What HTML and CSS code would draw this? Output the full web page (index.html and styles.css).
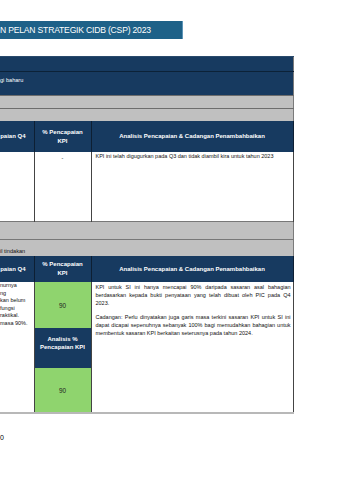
FILE: index.html
```html
<!DOCTYPE html>
<html>
<head>
<meta charset="utf-8">
<link rel="stylesheet" href="styles.css">
</head>
<body>
<div class="page">
  <div class="title">N PELAN STRATEGIK CIDB (CSP) 2023</div>
  <table class="kpi">
    <colgroup><col class="c1"><col class="c2"><col class="c3"></colgroup>
    <tr class="navy r1"><td colspan="3"></td></tr>
    <tr class="navy r2"><td colspan="3" class="top">gi baharu</td></tr>
    <tr class="grey r3"><td colspan="3"></td></tr>
    <tr class="grey r3"><td colspan="3"></td></tr>
    <tr class="navy head h1">
      <th class="left">paian Q4</th>
      <th>% Pencapaian<br>KPI</th>
      <th>Analisis Pencapaian &amp; Cadangan Penambahbaikan</th>
    </tr>
    <tr class="data d1">
      <td></td>
      <td class="center">-</td>
      <td class="text">KPI ini telah digugurkan pada Q3 dan tidak diambil kira untuk tahun 2023</td>
    </tr>
    <tr class="grey g1"><td colspan="3"></td></tr>
    <tr class="grey g2"><td colspan="3" class="bottom">il tindakan</td></tr>
    <tr class="navy head h2">
      <th class="left">paian Q4</th>
      <th>% Pencapaian<br>KPI</th>
      <th>Analisis Pencapaian &amp; Cadangan Penambahbaikan</th>
    </tr>
    <tr class="data s1">
      <td rowspan="3" class="text lefttext">nurnya<br>ng<br>kan belum<br>fungsi<br>raktikal.<br>masa 90%.</td>
      <td class="green">90</td>
      <td rowspan="3" class="text">
        <p class="para">
          <span class="jl">KPI untuk SI ini hanya mencapai 90% daripada sasaran asal bahagian</span>
          <span class="jl">berdasarkan kepada bukti penyataan yang telah dibuat oleh PIC pada Q4</span>
          <span class="ll">2023.</span>
        </p>
        <p class="para">
          <span class="jl">Cadangan: Perlu dinyatakan juga garis masa terkini sasaran KPI untuk SI ini</span>
          <span class="jl">dapat dicapai sepenuhnya sebanyak 100% bagi memudahkan bahagian untuk</span>
          <span class="ll">membentuk sasaran KPI berkaitan seterusnya pada tahun 2024.</span>
        </p>
      </td>
    </tr>
    <tr class="s2"><td class="navycell">Analisis %<br>Pencapaian KPI</td></tr>
    <tr class="s3"><td class="green">90</td></tr>
  </table>
  <div class="foot">0</div>
</div>
</body>
</html>
```

FILE: styles.css
```css
html, body {
  margin: 0;
  padding: 0;
  background: #ffffff;
}
.page {
  font-family: "Liberation Sans", Arial, sans-serif;
  color: #111;
  padding-top: 21px;
}
.title {
  width: 182px;
  height: 18px;
  background: #1e6188;
  border-right: 1px solid #5d95b8;
  color: #fff;
  font-size: 8.6px;
  line-height: 18px;
  white-space: nowrap;
  letter-spacing: -0.2px;
}
.kpi {
  margin-top: 17px;
  border-collapse: collapse;
  width: 293px;
  table-layout: fixed;
  border-right: 1px solid #7b7b7b;
  border-bottom: 2px solid #b8b8b8;
}
.c1 { width: 34px; }
.c2 { width: 57px; }
.c3 { width: 202px; }
.kpi td, .kpi th {
  padding: 0;
  font-size: 5.5px;
  vertical-align: top;
}
.navy td, .navy th, .kpi td.navycell {
  background: #173a60;
  color: #fff;
}
.r1 td { height: 14px; border-top: 1px solid #2a4a6c; border-bottom: 1px solid #0c2238; }
.kpi .r2 td { height: 18px; padding-top: 5px; font-size: 5.6px; line-height: 7px; }
.grey td { background: #c0c0c0; }
.r3 td { height: 12px; border-top: 1px solid #6d6d6d; }
.kpi .head th {
  font-weight: bold;
  font-size: 6px;
  text-align: center;
  vertical-align: middle;
  line-height: 9px;
  border-right: 1px solid #0d1f33;
}
.kpi .head th.left { text-align: right; padding-right: 8px; }
.h1 th { height: 31px; }
.h2 th { height: 26px; }
.data td {
  background: #fff;
  border-right: 1px solid #444;
}
.d1 td { height: 66px; }
.kpi td.center { text-align: center; padding-top: 3px; }
.kpi td.text { padding: 1px 2px 0 4px; line-height: 7.6px; color: #111; }
.kpi td.lefttext { padding-left: 0; padding-top: 0; }
.para {
  margin: 0 0 6px 0;
  line-height: 8px;
}
.jl, .ll {
  display: block;
  white-space: nowrap;
}
.jl {
  white-space: normal;
  text-align: justify;
  text-align-last: justify;
}
.g1 td { height: 17px; border-top: 1px solid #777; }
.kpi .g2 td { height: 14px; border-top: 1px solid #777; vertical-align: bottom; font-size: 5.6px; padding-bottom: 2px; }
.kpi td.green {
  background: #8fd46e;
  text-align: center;
  vertical-align: middle;
  font-size: 6.4px;
  color: #222;
  border-right: 1px solid #444;
  border-left: 1px solid #444;
}
.s1 td.green { height: 46px; }
.s3 td.green { height: 44px; }
.kpi td.navycell {
  height: 33px;
  text-align: center;
  font-weight: bold;
  font-size: 6px;
  line-height: 8px;
  padding-top: 7px;
  border-right: 1px solid #444;
  border-left: 1px solid #444;
}
.foot {
  margin-top: 20px;
  font-size: 7px;
  line-height: 8px;
  color: #000;
}
```
